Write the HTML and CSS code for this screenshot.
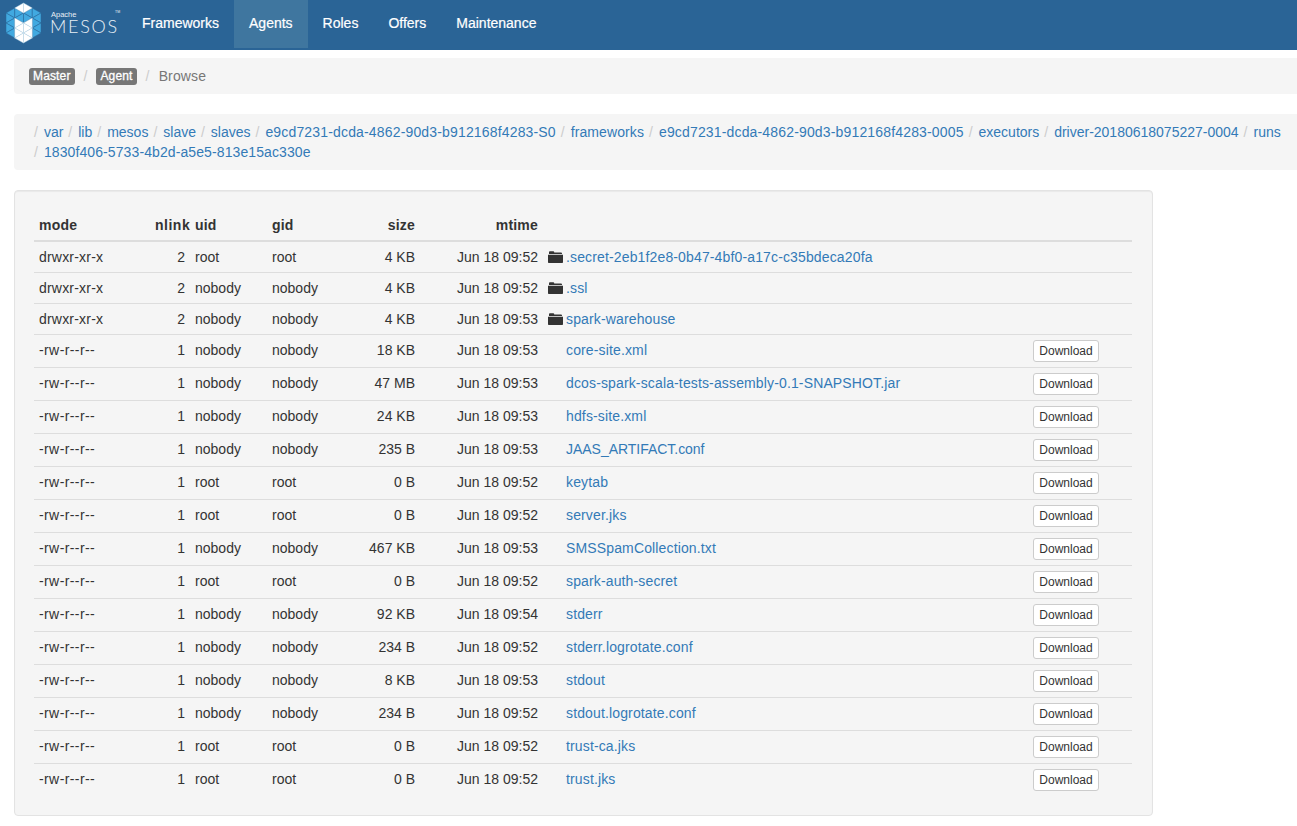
FILE: index.html
```html
<!DOCTYPE html>
<html lang="en">
<head>
<meta charset="utf-8">
<title>Mesos</title>
<link rel="stylesheet" href="styles.css">
</head>
<body>
<nav class="navbar">
  <a class="brand" href="#">
    <svg class="logo" width="44" height="46" viewBox="2 0 44 46">
      <g class="tri-blue">
        <polygon points="6,13 14.75,8 14.75,18"/><polygon points="6,13 14.75,18 6,23"/><polygon points="6,23 14.75,18 14.75,28"/><polygon points="6,23 14.75,28 6,33"/><polygon points="6,33 14.75,28 14.75,38"/>
        <polygon points="14.75,8 23.5,13 14.75,18"/><polygon points="32.25,8 23.5,13 32.25,18"/>
        <polygon points="14.75,18 23.5,13 23.5,23"/><polygon points="23.5,13 32.25,18 23.5,23"/>
        <polygon points="41,13 32.25,8 32.25,18"/><polygon points="41,13 32.25,18 41,23"/><polygon points="41,23 32.25,18 32.25,28"/><polygon points="41,23 32.25,28 41,33"/><polygon points="41,33 32.25,28 32.25,38"/>
      </g>
      <g class="tri-white">
        <polygon points="14.75,8 23.5,3 23.5,13"/><polygon points="32.25,8 23.5,3 23.5,13"/>
        <polygon points="14.75,18 23.5,23 14.75,28"/><polygon points="14.75,28 23.5,23 23.5,33"/><polygon points="32.25,18 23.5,23 32.25,28"/><polygon points="32.25,28 23.5,23 23.5,33"/>
        <polygon points="14.75,28 23.5,33 14.75,38"/><polygon points="23.5,33 32.25,28 32.25,38"/>
        <polygon points="14.75,38 23.5,33 23.5,43"/><polygon points="32.25,38 23.5,33 23.5,43"/>
      </g>
    </svg>
    <span class="wordmark">
      <span class="apache">Apache</span>
      <span class="mesos">MESOS</span>
      <span class="tm">TM</span>
    </span>
  </a>
  <ul class="nav">
    <li><a href="#">Frameworks</a></li>
    <li class="active"><a href="#">Agents</a></li>
    <li><a href="#">Roles</a></li>
    <li><a href="#">Offers</a></li>
    <li><a href="#">Maintenance</a></li>
  </ul>
</nav>
<main class="page">
  <ol class="crumbs crumbs-top">
    <li><a class="label" href="#">Master</a></li>
    <li><a class="label" href="#">Agent</a></li>
    <li class="current">Browse</li>
  </ol>
  <ol class="crumbs crumbs-path">
    <li><a href="#">var</a></li>
    <li><a href="#">lib</a></li>
    <li><a href="#">mesos</a></li>
    <li><a href="#">slave</a></li>
    <li><a href="#">slaves</a></li>
    <li><a class="hash" href="#">e9cd7231-dcda-4862-90d3-b912168f4283-S0</a></li>
    <li><a class="word" href="#">frameworks</a></li>
    <li><a class="hash" href="#">e9cd7231-dcda-4862-90d3-b912168f4283-0005</a></li>
    <li><a href="#">executors</a></li>
    <li><a href="#">driver-20180618075227-0004</a></li>
    <li><a href="#">runs</a></li>
    <li><a class="word" href="#">1830f406-5733-4b2d-a5e5-813e15ac330e</a></li>
  </ol>
  <section class="well">
    <table class="files" id="files">
      <colgroup>
        <col class="c-mode"><col class="c-nlink"><col class="c-uid"><col class="c-gid"><col class="c-size"><col class="c-mtime"><col class="c-name"><col class="c-dl">
      </colgroup>
      <thead>
        <tr><th>mode</th><th class="num nlink">nlink</th><th>uid</th><th>gid</th><th class="num">size</th><th class="num">mtime</th><th></th><th></th></tr>
      </thead>
      <tbody>
        <tr><td class="dirmode">drwxr-xr-x</td><td class="num">2</td><td>root</td><td>root</td><td class="num">4 KB</td><td class="num">Jun 18 09:52</td><td class="name"><svg class="folder" width="15" height="12" viewBox="0 0 15 12"><path d="M1 1.6V1C1 .5 1.4.2 1.9.2h3.4c.5 0 .9.3.9.8v.6h6.900c.5 0 .9.4.9.9V3H1zM0 3.800h15V11c0 .6-.4 1-1 1H1c-.6 0-1-.4-1-1z"/></svg><a href="#">.secret-2eb1f2e8-0b47-4bf0-a17c-c35bdeca20fa</a></td><td></td></tr>
        <tr><td class="dirmode">drwxr-xr-x</td><td class="num">2</td><td>nobody</td><td>nobody</td><td class="num">4 KB</td><td class="num">Jun 18 09:52</td><td class="name"><svg class="folder" width="15" height="12" viewBox="0 0 15 12"><path d="M1 1.6V1C1 .5 1.4.2 1.9.2h3.4c.5 0 .9.3.9.8v.6h6.900c.5 0 .9.4.9.9V3H1zM0 3.800h15V11c0 .6-.4 1-1 1H1c-.6 0-1-.4-1-1z"/></svg><a href="#">.ssl</a></td><td></td></tr>
        <tr><td class="dirmode">drwxr-xr-x</td><td class="num">2</td><td>nobody</td><td>nobody</td><td class="num">4 KB</td><td class="num">Jun 18 09:53</td><td class="name"><svg class="folder" width="15" height="12" viewBox="0 0 15 12"><path d="M1 1.6V1C1 .5 1.4.2 1.9.2h3.4c.5 0 .9.3.9.8v.6h6.900c.5 0 .9.4.9.9V3H1zM0 3.800h15V11c0 .6-.4 1-1 1H1c-.6 0-1-.4-1-1z"/></svg><a href="#">spark-warehouse</a></td><td></td></tr>
        <tr><td class="mode">-rw-r--r--</td><td class="num">1</td><td>nobody</td><td>nobody</td><td class="num">18 KB</td><td class="num">Jun 18 09:53</td><td class="name file"><a href="#">core-site.xml</a></td><td><button class="btn">Download</button></td></tr>
        <tr><td class="mode">-rw-r--r--</td><td class="num">1</td><td>nobody</td><td>nobody</td><td class="num">47 MB</td><td class="num">Jun 18 09:53</td><td class="name file"><a href="#">dcos-spark-scala-tests-assembly-0.1-SNAPSHOT.jar</a></td><td><button class="btn">Download</button></td></tr>
        <tr><td class="mode">-rw-r--r--</td><td class="num">1</td><td>nobody</td><td>nobody</td><td class="num">24 KB</td><td class="num">Jun 18 09:53</td><td class="name file"><a href="#">hdfs-site.xml</a></td><td><button class="btn">Download</button></td></tr>
        <tr><td class="mode">-rw-r--r--</td><td class="num">1</td><td>nobody</td><td>nobody</td><td class="num">235 B</td><td class="num">Jun 18 09:53</td><td class="name file"><a class="tight" href="#">JAAS_ARTIFACT.conf</a></td><td><button class="btn">Download</button></td></tr>
        <tr><td class="mode">-rw-r--r--</td><td class="num">1</td><td>root</td><td>root</td><td class="num">0 B</td><td class="num">Jun 18 09:52</td><td class="name file"><a href="#">keytab</a></td><td><button class="btn">Download</button></td></tr>
        <tr><td class="mode">-rw-r--r--</td><td class="num">1</td><td>root</td><td>root</td><td class="num">0 B</td><td class="num">Jun 18 09:52</td><td class="name file"><a href="#">server.jks</a></td><td><button class="btn">Download</button></td></tr>
        <tr><td class="mode">-rw-r--r--</td><td class="num">1</td><td>nobody</td><td>nobody</td><td class="num">467 KB</td><td class="num">Jun 18 09:53</td><td class="name file"><a href="#">SMSSpamCollection.txt</a></td><td><button class="btn">Download</button></td></tr>
        <tr><td class="mode">-rw-r--r--</td><td class="num">1</td><td>root</td><td>root</td><td class="num">0 B</td><td class="num">Jun 18 09:52</td><td class="name file"><a href="#">spark-auth-secret</a></td><td><button class="btn">Download</button></td></tr>
        <tr><td class="mode">-rw-r--r--</td><td class="num">1</td><td>nobody</td><td>nobody</td><td class="num">92 KB</td><td class="num">Jun 18 09:54</td><td class="name file"><a href="#">stderr</a></td><td><button class="btn">Download</button></td></tr>
        <tr><td class="mode">-rw-r--r--</td><td class="num">1</td><td>nobody</td><td>nobody</td><td class="num">234 B</td><td class="num">Jun 18 09:52</td><td class="name file"><a href="#">stderr.logrotate.conf</a></td><td><button class="btn">Download</button></td></tr>
        <tr><td class="mode">-rw-r--r--</td><td class="num">1</td><td>nobody</td><td>nobody</td><td class="num">8 KB</td><td class="num">Jun 18 09:53</td><td class="name file"><a href="#">stdout</a></td><td><button class="btn">Download</button></td></tr>
        <tr><td class="mode">-rw-r--r--</td><td class="num">1</td><td>nobody</td><td>nobody</td><td class="num">234 B</td><td class="num">Jun 18 09:52</td><td class="name file"><a href="#">stdout.logrotate.conf</a></td><td><button class="btn">Download</button></td></tr>
        <tr><td class="mode">-rw-r--r--</td><td class="num">1</td><td>root</td><td>root</td><td class="num">0 B</td><td class="num">Jun 18 09:52</td><td class="name file"><a href="#">trust-ca.jks</a></td><td><button class="btn">Download</button></td></tr>
        <tr><td class="mode">-rw-r--r--</td><td class="num">1</td><td>root</td><td>root</td><td class="num">0 B</td><td class="num">Jun 18 09:52</td><td class="name file"><a href="#">trust.jks</a></td><td><button class="btn">Download</button></td></tr>
      </tbody>
    </table>
  </section>
</main>
</body>
</html>
```

FILE: styles.css
```css
* { box-sizing: border-box; }
html, body { margin: 0; padding: 0; }
body {
  font-family: "Liberation Sans", Arial, sans-serif;
  font-size: 14px;
  line-height: 20px;
  color: #333;
  background: #fff;
  overflow-x: hidden;
}
a { color: #337ab7; text-decoration: none; }

.navbar {
  display: flex;
  height: 50px;
  background: #2a6496;
}
.brand {
  display: flex;
  width: 127px;
  flex: none;
  color: #fff;
}
.logo { display: block; margin-left: 2px; flex: none; }
.tri-blue polygon { fill: #41a9e0; stroke: #2a6496; stroke-width: .5; }
.tri-white polygon { fill: #fff; stroke: #b9d9ec; stroke-width: .4; }
.wordmark {
  position: relative;
  display: block;
  flex: 1;
  color: #e8eff5;
}
.apache {
  position: absolute;
  left: 5px;
  top: 10px;
  font-size: 7.5px;
  line-height: 9px;
}
.mesos {
  position: absolute;
  left: 4px;
  top: 20px;
  font-family: Lato, "Liberation Sans", sans-serif;
  font-weight: 300;
  font-size: 18px;
  line-height: 12px;
  letter-spacing: 1.7px;
}
.tm {
  position: absolute;
  left: 69px;
  top: 10px;
  font-size: 3.5px;
  line-height: 5px;
}
.nav {
  display: flex;
  list-style: none;
  margin: 0;
  padding: 0;
}
.nav a {
  display: block;
  padding: 13px 15px 17px;
  color: #fff;
  -webkit-text-stroke: .2px #fff;
}
.nav .active { background: #3f769f; height: 48px; }

.page { padding: 8px 0 0 14px; }
.crumbs {
  display: flex;
  flex-wrap: wrap;
  list-style: none;
  margin: 0;
  background: #f5f5f5;
  border-radius: 4px 0 0 4px;
}
.crumbs-top { height: 36px; padding: 8px 15px; margin-bottom: 20px; align-items: center; }
.crumbs-top li { display: flex; align-items: center; }
.crumbs-top li + li::before { content: "/"; color: #ccc; margin: 0 9px; }
.label {
  display: block;
  height: 17px;
  padding: 0 4px;
  font-size: 12px;
  line-height: 17px;
  letter-spacing: .15px;
  color: #fff;
  background: #777;
  border-radius: 3px;
  -webkit-text-stroke: .3px #fff;
}
.current { color: #777; letter-spacing: .15px; }
.crumbs-path { padding: 8px 15px; margin-bottom: 20px; }
.crumbs-path li::before { content: "/"; color: #ccc; margin: 0 6px 0 5px; }
.crumbs-path .hash { letter-spacing: .16px; }
.crumbs-path .word { letter-spacing: .1px; }

.well {
  width: 1139px;
  padding: 19px;
  min-height: 20px;
  background: #f5f5f5;
  border: 1px solid #e3e3e3;
  border-radius: 4px;
  box-shadow: inset 0 1px 1px rgba(0, 0, 0, .05);
}
.files {
  width: 1098px;
  table-layout: fixed;
  border-collapse: collapse;
  border-spacing: 0;
}
.c-mode { width: 116px; }
.c-nlink { width: 40px; }
.c-uid { width: 77px; }
.c-gid { width: 83px; }
.c-size { width: 70px; }
.c-mtime { width: 123px; }
.c-name { width: 485px; }
.c-dl { width: 104px; }
.files th, .files td {
  padding: 5px;
  text-align: left;
  vertical-align: top;
  line-height: 20px;
  white-space: nowrap;
}
.files th { font-weight: bold; border-bottom: 2px solid #ddd; letter-spacing: .2px; }
.files th.nlink { letter-spacing: .5px; }
.files td { border-bottom: 1px solid #ddd; }
.files tbody tr:last-child td { border-bottom: 0; }
.files .num { text-align: right; }
.files .mode { letter-spacing: .4px; }
.files .dirmode { letter-spacing: .2px; }
.files .name a { letter-spacing: .14px; }
.files .name a.tight { letter-spacing: -.03px; }
.folder { display: inline-block; vertical-align: -1px; margin-right: 3px; fill: #333; }
.name.file { padding-left: 23px; }
.btn {
  display: block;
  width: 66px;
  height: 22px;
  padding: 0;
  font: 12px/20px "Liberation Sans", Arial, sans-serif;
  color: #333;
  background: #fff;
  border: 1px solid #ccc;
  border-radius: 3px;
}
```
